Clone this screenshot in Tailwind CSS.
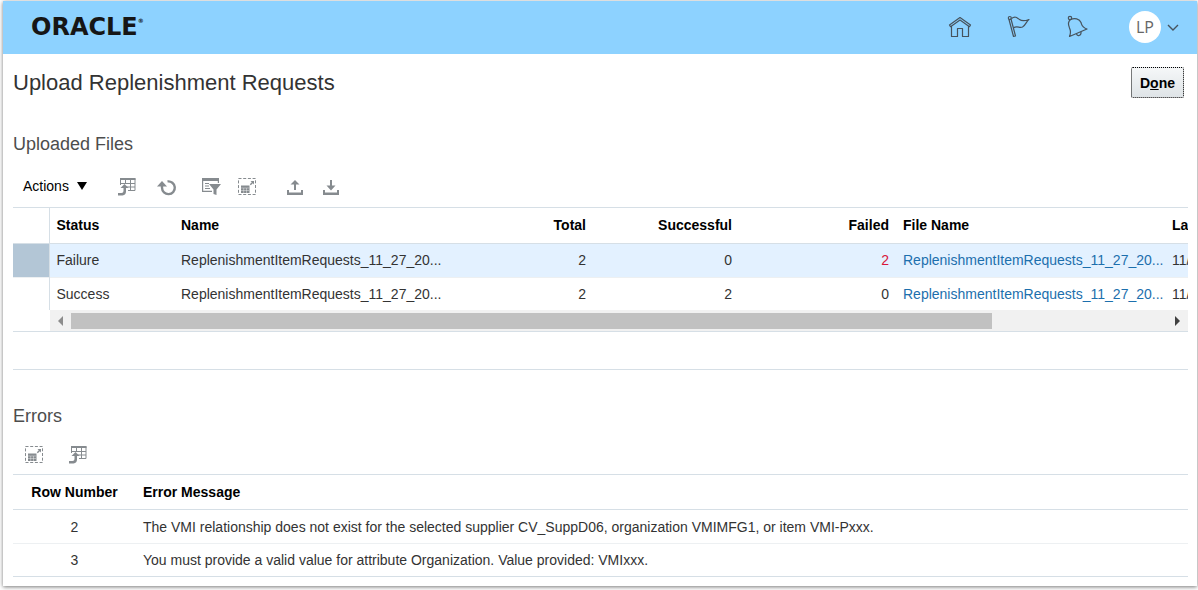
<!DOCTYPE html>
<html lang="en">
<head>
    <meta charset="UTF-8">
    <meta name="viewport" content="width=device-width, initial-scale=1.0">
    <title>Upload Replenishment Requests</title>
    <script src="https://cdn.jsdelivr.net/npm/@tailwindcss/browser@4"></script>
</head>
<body class="bg-white pl-[3px] pr-px pt-px pb-1 font-['Liberation_Sans',Arial,sans-serif] text-sm text-[#333333]">
    <!-- Shared table icons -->
    <svg class="hidden">
        <symbol id="icon-export" viewBox="0 0 20 20">
            <path fill="none" stroke="#868b8f" d="M3.500 8V1.500h14.500v12H11M3 6.500h15M9 10h9M8.500 2v4M13.500 2v11.500"/>
            <path fill="#868b8f" d="M3 1h15.500v2H3zM6.500 14V11H3.500L7.500 7l4 4H9v3.500Q9 18 5.500 18.500H1V16h3.500q2 0 2-2z"/>
        </symbol>
        <symbol id="icon-detach" viewBox="0 0 20 20">
            <path fill="none" stroke="#868b8f" stroke-dasharray="3 1.700" d="M1.500 1.500h17v16h-17z"/>
            <path fill="#868b8f" d="M4 8.500h8.500V16H4zM13.500 4H17v3.500l-1.200-1.200-2 2-1-1 2-2z"/>
            <path fill="none" stroke="#fff" stroke-width=".4" d="M4 11h8M4 13.500h8M6.700 11V16M9.500 11V16"/>
        </symbol>
    </svg>

    <div class="bg-white pb-[9px] shadow-[0_1px_4px_#777777]">
        <!-- Header -->
        <header class="flex h-[53px] items-center justify-between bg-[#8dd2ff] pb-0.5 pl-7 pr-[18px]">
            <a href="#" class="flex items-start font-['DejaVu_Sans',sans-serif] text-2xl font-bold leading-6 text-[#161616]">ORACLE<span class="text-[6px] leading-3">®</span></a>
            <nav class="flex items-center">
                <a href="#" aria-label="Home" class="mr-[35px]">
                    <svg class="size-6" viewBox="0 0 24 24" fill="none" stroke="#46535d" stroke-width="1.200" stroke-linejoin="round">
                        <path d="M12 2.500 1.500 10l1 1.700L12 5l9.500 6.700 1-1.700zM3.500 11v10.500h6v-8h5v8h6V11"/>
                    </svg>
                </a>
                <a href="#" aria-label="Flag" class="mr-[35px]">
                    <svg class="size-6" viewBox="0 0 24 24" fill="none" stroke="#46535d" stroke-width="1.200" stroke-linejoin="round">
                        <path d="m2 4.500 4.500 17 2-.5-4.500-17z"/>
                        <circle cx="2.800" cy="3" r="1.500"/>
                        <path d="M4.500 3.500C8 .8 10 2.500 12.500 4.500c2.500 2 5.500 1.500 9.500 0-2.500 1.500-3 5.500-6.500 7.500-3 1.500-5-1.500-9 .8"/>
                    </svg>
                </a>
                <a href="#" aria-label="Notifications" class="mr-[39px]">
                    <svg class="size-6" viewBox="0 0 24 24" fill="none" stroke="#46535d" stroke-width="1.200" stroke-linejoin="round">
                        <path d="M4.500 4.500c4-1.500 9-1 10.500 3 1 2.700.5 4.500 6 6.500L3.500 21.500c1.500-3.500 1.500-5.500 0-8.500-1.300-3-1.500-6.500 1-8.500z"/>
                        <circle cx="4" cy="3" r="1.700"/>
                        <path d="M10.500 18.700c.5 3.300 5 2 4.500-1.900"/>
                    </svg>
                </a>
                <button class="flex items-center gap-1.5" aria-label="LP settings">
                    <span class="flex size-8 items-center justify-center rounded-full bg-white font-['Open_Sans',sans-serif] text-base text-[#666666]">LP</span>
                    <svg class="h-3 w-3" viewBox="0 0 12 12" fill="none" stroke="#46535d" stroke-width="1.400"><path d="m1 4 5 5 5-5"/></svg>
                </button>
            </nav>
        </header>

        <main class="pl-2.5 pr-[9px]">
            <!-- Title -->
            <div class="flex h-[57px] items-center justify-between pr-1">
                <h1 class="text-[22px]">Upload Replenishment Requests</h1>
                <button class="h-[31px] w-[53px] rounded-xs border border-dotted border-black bg-linear-to-b from-[#f5f7f8] to-[#dfe4e7] font-bold text-black">D<span class="underline">o</span>ne</button>
            </div>

            <!-- Uploaded files -->
            <section>
                <h2 class="flex h-[66px] items-center text-lg text-[#4d4d4d]">Uploaded Files</h2>
                <div class="flex h-[30px] items-start pl-2.5">
                    <button class="mt-px flex h-4 items-center gap-2 text-black">Actions
                        <svg class="h-2 w-2.5" viewBox="0 0 10 8"><path d="M0 0h10L5 8z"/></svg>
                    </button>
                    <button aria-label="Export to Excel" class="ml-[30px]"><svg class="size-5"><use href="#icon-export"/></svg></button>
                    <button aria-label="Refresh" class="ml-5">
                        <svg class="size-5" viewBox="0 0 20 20"><path fill="none" stroke="#868b8f" stroke-width="2.400" d="M10.500 4.400a6.400 6.400 0 1 1-5.500 6.400V8"/><path fill="#868b8f" d="M0 9.500 5 4l5 5.500z"/></svg>
                    </button>
                    <button aria-label="Query by Example" class="ml-6">
                        <svg class="size-5" viewBox="0 0 20 20"><path fill="#868b8f" d="M1 1h17v3H1zM8 7h12l-4.500 5.500V18L12.500 17v-4.500z"/><path fill="none" stroke="#868b8f" stroke-width="1.200" d="M1.600 3v11.400H11M17.400 3v3M4 6.500h4M4 9h4M4 11.500h5"/></svg>
                    </button>
                    <button aria-label="Detach" class="ml-4"><svg class="size-5"><use href="#icon-detach"/></svg></button>
                    <button aria-label="Upload" class="ml-7">
                        <svg class="size-5" viewBox="0 0 20 20"><path fill="#868b8f" d="m10 3 4.500 4.500H11V13H9V7.500H5.500zM2 13h2v2.500h12V13h2v5H2z"/></svg>
                    </button>
                    <button aria-label="Download" class="ml-4">
                        <svg class="size-5" viewBox="0 0 20 20"><path fill="#868b8f" d="m10 13.500 4.500-5H11V3H9v5.500H5.500zM2 13h2v2.500h12V13h2v5H2z"/></svg>
                    </button>
                </div>

                <div class="overflow-hidden border-y border-[#d6dfe6]">
                    <table class="w-full table-fixed whitespace-nowrap text-left">
                        <colgroup>
                            <col class="w-[36px]">
                            <col class="w-[125px]">
                            <col class="w-[273px]">
                            <col class="w-[146px]">
                            <col class="w-[146px]">
                            <col class="w-[157px]">
                            <col class="w-[269px]">
                            <col>
                        </colgroup>
                        <thead class="text-black">
                            <tr class="h-[35px] border-b border-[#d6dfe6]">
                                <td class="border-r border-[#d6dfe6]"></td>
                                <th class="px-[7px]">Status</th>
                                <th class="px-[7px]">Name</th>
                                <th class="px-[7px] text-right">Total</th>
                                <th class="px-[7px] text-right">Successful</th>
                                <th class="px-[7px] text-right">Failed</th>
                                <th class="px-[7px]">File Name</th>
                                <th class="overflow-hidden pl-[7px]">La</th>
                            </tr>
                        </thead>
                        <tbody>
                            <tr class="h-[34px] border-b border-[#edf0f2] bg-[#e3f1ff]">
                                <td class="border-r border-[#d6dfe6] bg-[#b3c6d6]"></td>
                                <td class="px-[7px]">Failure</td>
                                <td class="px-[7px]">ReplenishmentItemRequests_11_27_20...</td>
                                <td class="px-[7px] text-right">2</td>
                                <td class="px-[7px] text-right">0</td>
                                <td class="px-[7px] text-right text-[#d9173b]">2</td>
                                <td class="px-[7px]"><a href="#" class="text-[#1c6fad]">ReplenishmentItemRequests_11_27_20...</a></td>
                                <td class="overflow-hidden pl-[7px]">11/</td>
                            </tr>
                            <tr class="h-[33px]">
                                <td class="border-r border-[#d6dfe6]"></td>
                                <td class="px-[7px]">Success</td>
                                <td class="px-[7px]">ReplenishmentItemRequests_11_27_20...</td>
                                <td class="px-[7px] text-right">2</td>
                                <td class="px-[7px] text-right">2</td>
                                <td class="px-[7px] text-right">0</td>
                                <td class="px-[7px]"><a href="#" class="text-[#1c6fad]">ReplenishmentItemRequests_11_27_20...</a></td>
                                <td class="overflow-hidden pl-[7px]">11/</td>
                            </tr>
                        </tbody>
                    </table>
                    <!-- Horizontal scrollbar -->
                    <div class="ml-[37px] flex h-[21px] items-center bg-[#f1f1f1]">
                        <button aria-label="Scroll left" class="flex w-[21px] justify-center"><svg class="h-2.5 w-[5px]" viewBox="0 0 5 10" fill="#8c8c8c"><path d="M5 0v10L0 5z"/></svg></button>
                        <div class="flex-1"><div class="h-4 w-[84%] bg-[#c1c1c1]"></div></div>
                        <button aria-label="Scroll right" class="flex w-[21px] justify-center"><svg class="h-2.5 w-[5px]" viewBox="0 0 5 10" fill="#404040"><path d="M0 0v10l5-5z"/></svg></button>
                    </div>
                </div>
            </section>

            <!-- Errors -->
            <section class="mt-[37px] border-t border-[#d6dfe6] pt-4">
                <h2 class="flex h-[59px] items-center text-lg text-[#4d4d4d]">Errors</h2>
                <div class="flex h-[29px] items-start gap-6 pl-[11px]">
                    <button aria-label="Detach"><svg class="size-5"><use href="#icon-detach"/></svg></button>
                    <button aria-label="Export to Excel"><svg class="size-5"><use href="#icon-export"/></svg></button>
                </div>
                <table class="w-full table-fixed border-y border-[#d6dfe6] text-left">
                    <colgroup>
                        <col class="w-[123px]">
                        <col>
                    </colgroup>
                    <thead class="text-black">
                        <tr class="h-[35px] border-b border-[#d6dfe6]">
                            <th class="text-center">Row Number</th>
                            <th class="px-[7px]">Error Message</th>
                        </tr>
                    </thead>
                    <tbody>
                        <tr class="h-[34px] border-b border-[#edf0f2]">
                            <td class="text-center">2</td>
                            <td class="px-[7px]">The VMI relationship does not exist for the selected supplier CV_SuppD06, organization VMIMFG1, or item VMI-Pxxx.</td>
                        </tr>
                        <tr class="h-[33px]">
                            <td class="text-center">3</td>
                            <td class="px-[7px]">You must provide a valid value for attribute Organization. Value provided: VMIxxx.</td>
                        </tr>
                    </tbody>
                </table>
            </section>
        </main>
    </div>
</body>
</html>
